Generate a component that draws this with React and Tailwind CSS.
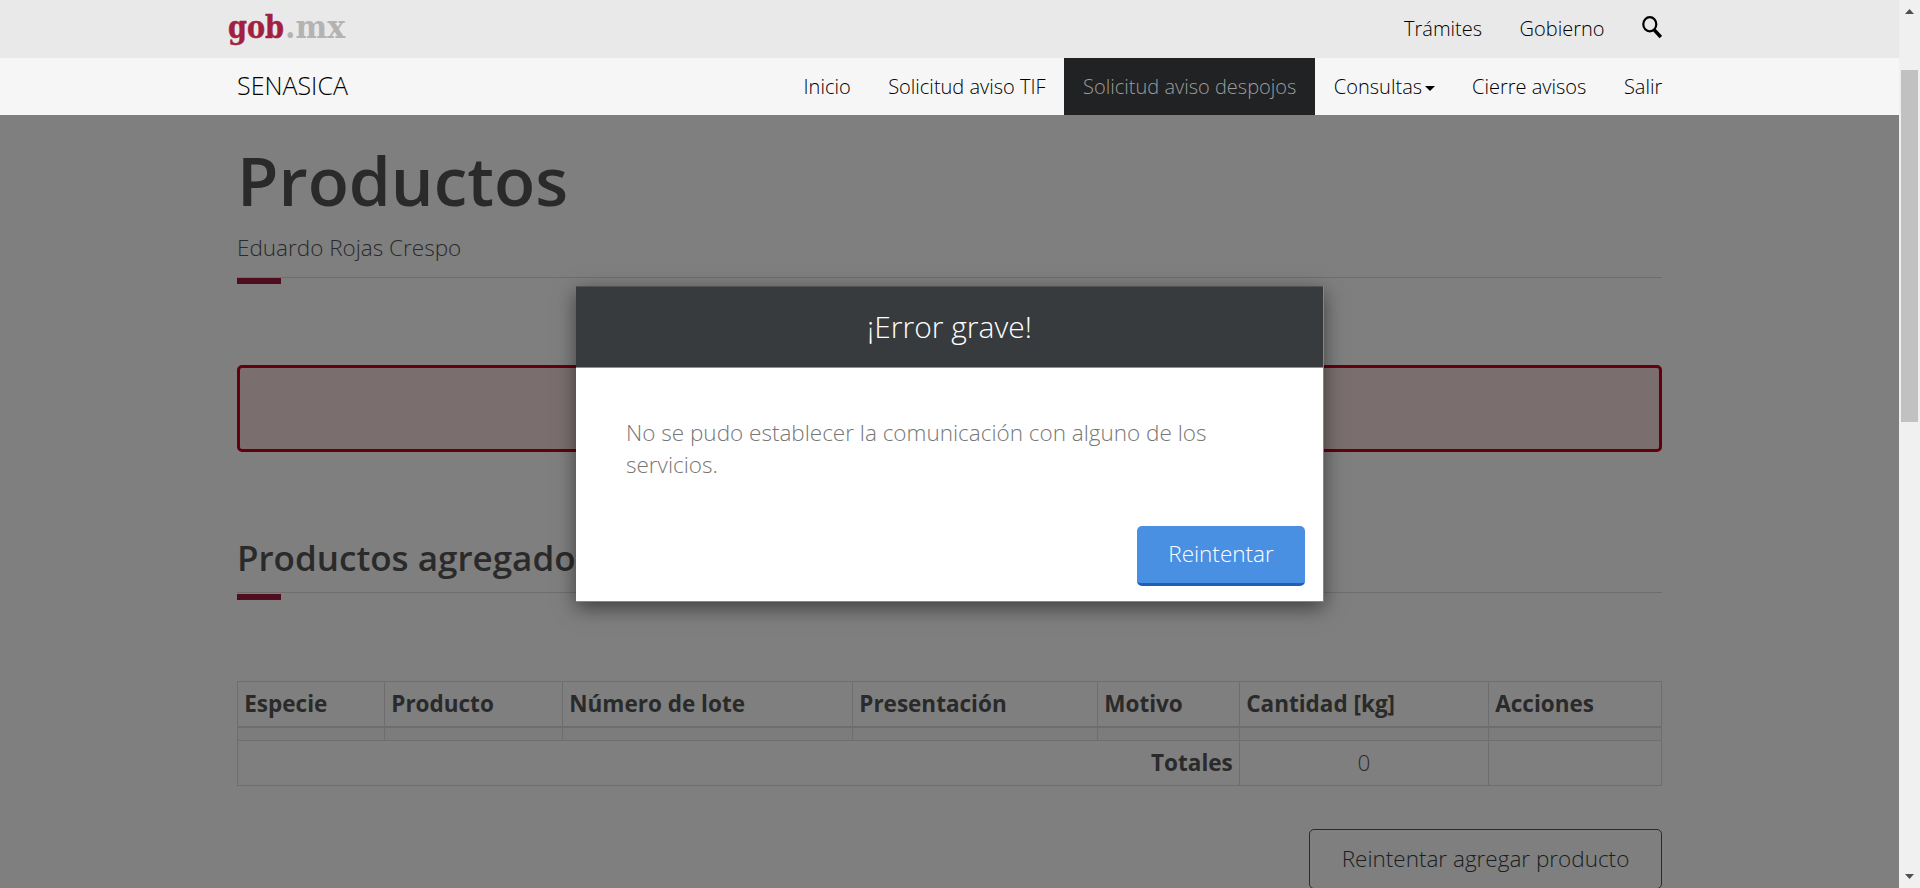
const NAV = [
  { label: 'Inicio' },
  { label: 'Solicitud aviso TIF' },
  { label: 'Solicitud aviso despojos', active: true },
  { label: 'Consultas', caret: true },
  { label: 'Cierre avisos' },
  { label: 'Salir' },
];

const COLUMNS = [
  { label: 'Especie', width: 147 },
  { label: 'Producto', width: 178 },
  { label: 'Número de lote', width: 290 },
  { label: 'Presentación', width: 245 },
  { label: 'Motivo', width: 142 },
  { label: 'Cantidad [kg]', width: 249 },
  { label: 'Acciones', width: 173 },
];

function Logo() {
  return (
    <svg width="122" height="58" viewBox="-2 0 122 58" aria-label="gob.mx">
      <g fontFamily="'DejaVu Serif', serif" fontWeight="700" fontSize="32">
        <text x="0" y="38" fill="#a21f42" stroke="#a21f42" strokeWidth="0.5" textLength="56" lengthAdjust="spacingAndGlyphs">gob</text>
        <text x="57" y="38" fill="#b3b3b3" textLength="60" lengthAdjust="spacingAndGlyphs">.mx</text>
      </g>
    </svg>
  );
}

function SearchIcon() {
  return (
    <svg width="20" height="24" viewBox="0 0 20 24" fill="none" stroke="#000">
      <ellipse cx="7.8" cy="8.2" rx="6.5" ry="7.1" strokeWidth="2.2" />
      <path d="M12.3 14 18.8 21" strokeWidth="3.4" />
    </svg>
  );
}

function TopBar() {
  return (
    <div className="flex h-[58px] items-start justify-between bg-[#e9e9e9] pl-[226px] pr-[237px]">
      <Logo />
      <div className="flex items-start text-[20px] leading-[28px] text-black">
        <a className="mr-[37.5px] mt-[15px]">Trámites</a>
        <a className="mr-[37.5px] mt-[15px]">Gobierno</a>
        <span className="mt-[16px]">
          <SearchIcon />
        </span>
      </div>
    </div>
  );
}

function NavBar() {
  return (
    <div className="flex h-[57px] items-stretch justify-between bg-[#f6f6f6] pl-[237px] pr-[218px]">
      <span className="pt-[10px] text-[25px] leading-[35px] text-black">SENASICA</span>
      <nav className="flex text-[20px] leading-[28px]">
        {NAV.map((item) => (
          <a
            key={item.label}
            className={
              item.active
                ? 'flex items-start bg-[#212224] px-[18.75px] pt-[15px] text-[#9d9d9d]'
                : 'flex items-start px-[18.75px] pt-[15px] text-black'
            }
          >
            {item.label}
            {item.caret && (
              <span className="ml-[2.5px] mt-[13px] h-0 w-0 border-x-[5px] border-t-[5px] border-x-transparent border-t-black" />
            )}
          </a>
        ))}
      </nav>
    </div>
  );
}

function Rule() {
  return (
    <div className="border-t border-[#dddddd]">
      <div className="h-[6px] w-[44px] bg-[#a01a40]" />
    </div>
  );
}

function ProductsTable() {
  return (
    <table className="w-[1425px] table-fixed border-collapse border border-[#dddddd] text-[22.5px] leading-[32px] text-[#545454]">
      <colgroup>
        {COLUMNS.map((c) => (
          <col key={c.label} style={{ width: c.width }} />
        ))}
      </colgroup>
      <thead>
        <tr className="h-[45px]">
          {COLUMNS.map((c) => (
            <th key={c.label} className="border border-b-2 border-[#dddddd] px-[6.25px] py-0 text-left font-bold">
              {c.label}
            </th>
          ))}
        </tr>
      </thead>
      <tbody>
        <tr className="h-[14px] bg-[#f9f9f9]">
          {COLUMNS.map((c) => (
            <td key={c.label} className="border border-[#dddddd] p-0" />
          ))}
        </tr>
        <tr className="h-[45px]">
          <td colSpan={5} className="border border-[#dddddd] px-[6.25px] py-0 text-right font-bold">Totales</td>
          <td className="border border-[#dddddd] px-[6.25px] py-0 text-center">0</td>
          <td className="border border-[#dddddd]" />
        </tr>
      </tbody>
    </table>
  );
}

function ErrorDialog() {
  return (
    <div className="h-[316px] w-[748px] border-b border-r border-[#858585] bg-white shadow-[0_6px_19px_rgba(0,0,0,0.5)]">
      <div className="h-[82px] border-b border-t border-b-[#8b9094] border-t-[#505355] bg-[#383b3d] pt-[19px] text-center text-[30px] leading-[42px] text-white">
        ¡Error grave!
      </div>
      <div className="h-[158px] px-[50px] pt-[49px] text-[22.5px] leading-[32px] text-[#777777]">
        No se pudo establecer la comunicación con alguno de los servicios.
      </div>
      <div className="flex justify-end pr-[18px]">
        <button className="h-[60px] w-[168px] rounded-[5px] border-b-[3px] border-[#1f60b5] bg-[#4a90e2] pb-[1px] text-[22.5px] leading-[32px] text-white">
          Reintentar
        </button>
      </div>
    </div>
  );
}

function ScrollBar() {
  return (
    <div className="flex h-full w-[21px] flex-col items-center bg-[#f0f0f0]">
      <svg width="9" height="5" viewBox="0 0 9 5" className="mt-[9px]" fill="#505050">
        <path d="M4.5 0 9 5H0z" />
      </svg>
      <div className="mt-[56px] h-[352px] w-[17px] bg-[#c1c1c1]" />
      <svg width="9" height="5" viewBox="0 0 9 5" className="mb-[9px] mt-auto" fill="#505050">
        <path d="M0 0h9L4.5 5z" />
      </svg>
    </div>
  );
}

export default function App() {
  return (
    <div className="flex h-[888px] w-[1920px] overflow-hidden bg-white font-['Open_Sans',sans-serif] font-light">
      <div className="flex h-full w-[1899px] flex-col">
        <header>
          <TopBar />
          <NavBar />
        </header>
        <div className="relative h-[773px] overflow-hidden">
          <main className="flex flex-col pl-[237px] pr-[237px] text-[#545454]">
            <h1 className="mt-[27px] h-[78px] text-[67.5px] font-semibold leading-[76px]">Productos</h1>
            <p className="mt-[12px] h-[45px] text-[22.5px] leading-[32px]">Eduardo Rojas Crespo</p>
            <Rule />
            <div className="mt-[81px] h-[87px] rounded-[5px] border-[3px] border-[#c80019] bg-[#f4dedc]" />
            <h2 className="mt-[86px] h-[54px] text-[35px] font-semibold leading-[40px]">Productos agregados</h2>
            <div className="border-t border-[#dddddd] pt-px">
              <div className="h-[6px] w-[44px] bg-[#a01a40]" />
            </div>
            <div className="mt-[81px]">
              <ProductsTable />
            </div>
            <div className="mt-[43px] flex justify-end">
              <button className="h-[60px] w-[353px] rounded-[5px] border border-[#545454] bg-white text-[22.5px] leading-[32px] text-[#393c3e]">
                Reintentar agregar producto
              </button>
            </div>
          </main>
          <div className="absolute inset-0 bg-black/50 pl-[576px] pt-[171px]">
            <ErrorDialog />
          </div>
        </div>
      </div>
      <ScrollBar />
    </div>
  );
}
